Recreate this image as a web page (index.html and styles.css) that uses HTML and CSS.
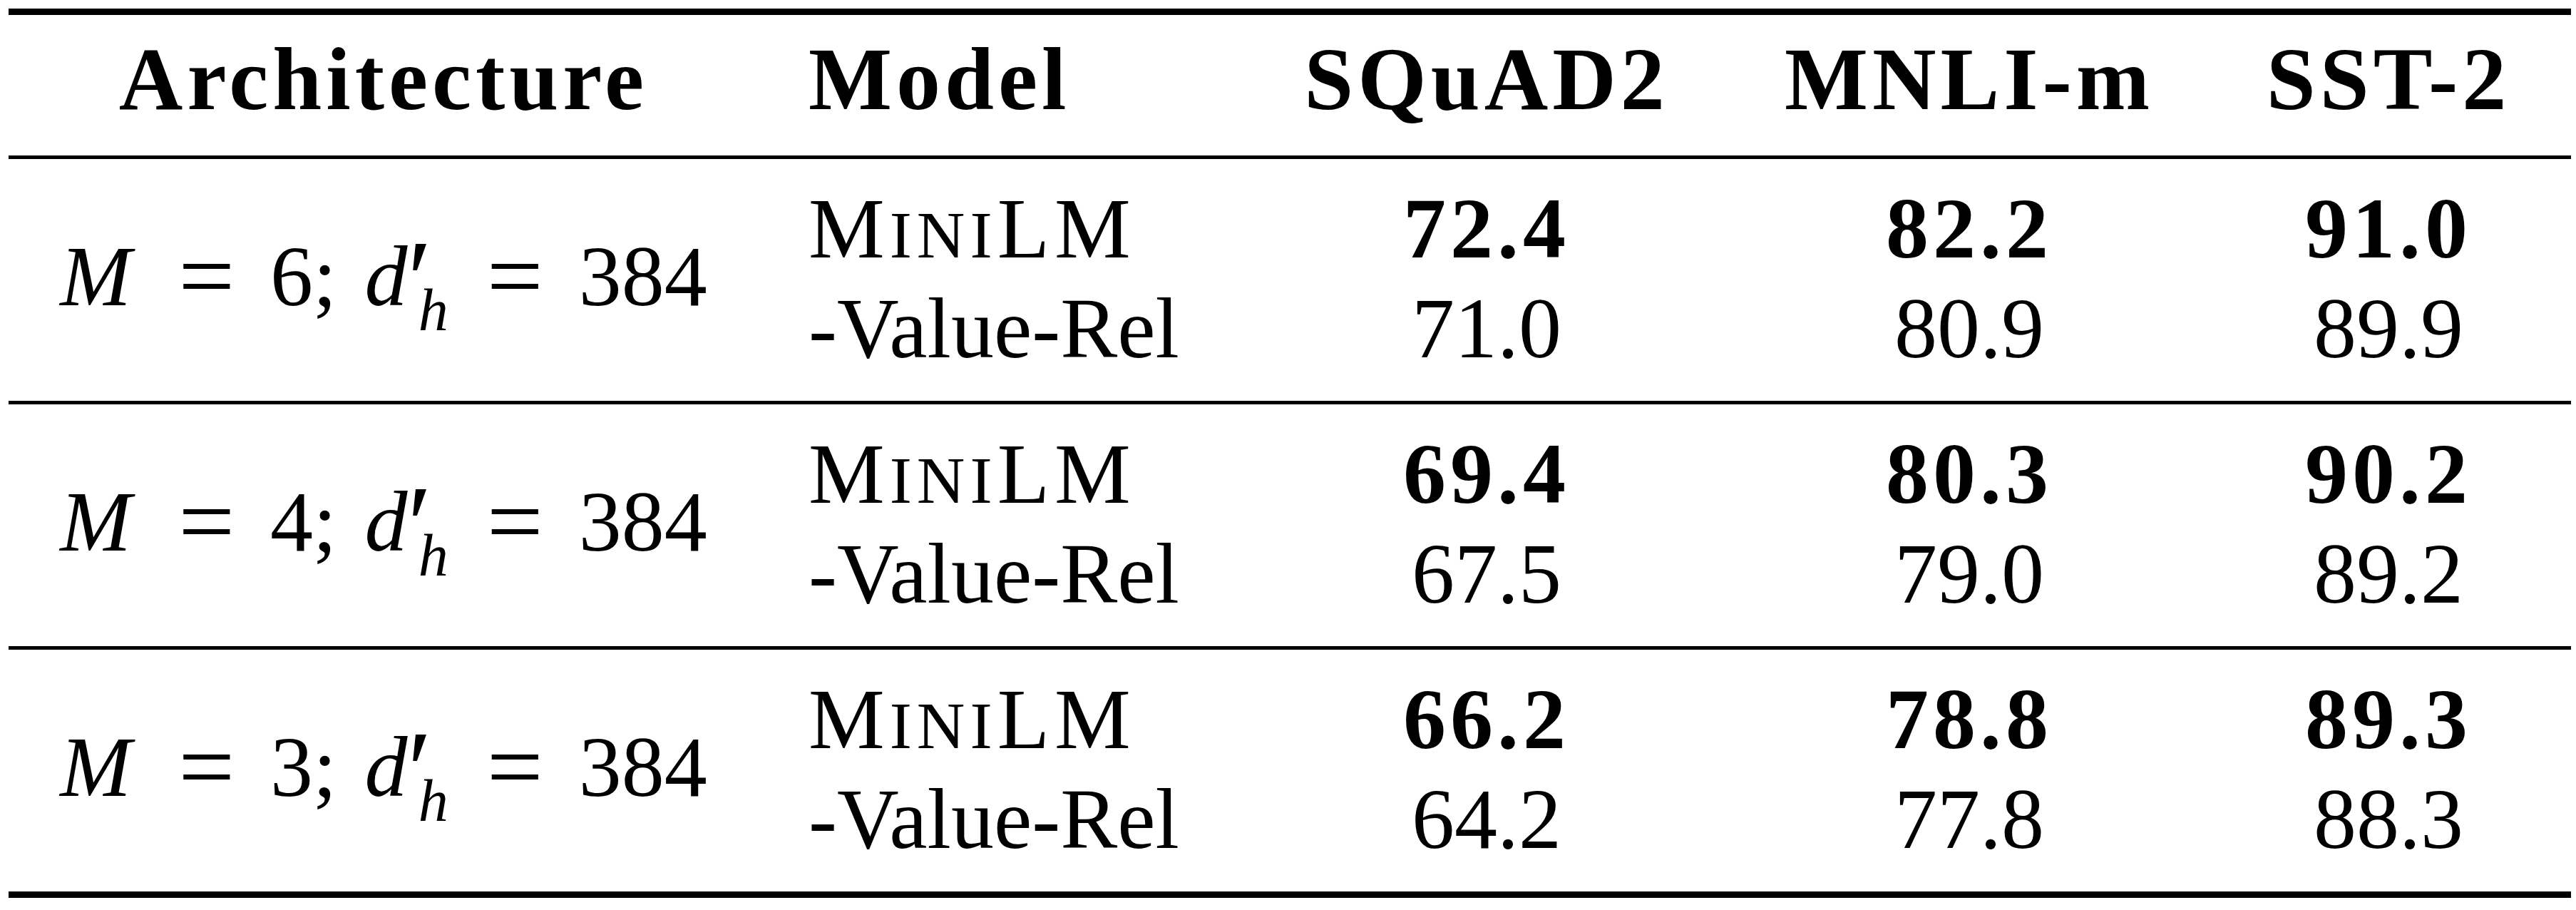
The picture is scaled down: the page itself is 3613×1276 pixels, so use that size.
FILE: index.html
```html
<!DOCTYPE html>
<html lang="en">
<head>
<meta charset="utf-8">
<title>MiniLM ablation table</title>
<link rel="stylesheet" href="styles.css">
</head>
<body>
<table class="results">
  <colgroup>
    <col class="c-arch"><col class="c-model"><col class="c-sq"><col class="c-mn"><col class="c-sst">
  </colgroup>
  <thead>
    <tr>
      <th>Architecture</th>
      <th class="model">Model</th>
      <th>SQuAD2</th>
      <th>MNLI-m</th>
      <th>SST-2</th>
    </tr>
  </thead>
  <tbody>
    <tr class="first">
      <td class="arch" rowspan="2"><span class="math"><i class="mi">M</i><span class="rel">=</span>6;<i class="mi d">d</i><span class="prime">′</span><i class="sub">h</i><span class="rel">=</span>384</span></td>
      <td class="model">M<span class="sc">ini</span>LM</td>
      <td class="best">72.4</td>
      <td class="best">82.2</td>
      <td class="best">91.0</td>
    </tr>
    <tr class="second">
      <td class="model">-Value-Rel</td>
      <td>71.0</td>
      <td>80.9</td>
      <td>89.9</td>
    </tr>
  </tbody>
  <tbody>
    <tr class="first">
      <td class="arch" rowspan="2"><span class="math"><i class="mi">M</i><span class="rel">=</span>4;<i class="mi d">d</i><span class="prime">′</span><i class="sub">h</i><span class="rel">=</span>384</span></td>
      <td class="model">M<span class="sc">ini</span>LM</td>
      <td class="best">69.4</td>
      <td class="best">80.3</td>
      <td class="best">90.2</td>
    </tr>
    <tr class="second">
      <td class="model">-Value-Rel</td>
      <td>67.5</td>
      <td>79.0</td>
      <td>89.2</td>
    </tr>
  </tbody>
  <tbody class="last">
    <tr class="first">
      <td class="arch" rowspan="2"><span class="math"><i class="mi">M</i><span class="rel">=</span>3;<i class="mi d">d</i><span class="prime">′</span><i class="sub">h</i><span class="rel">=</span>384</span></td>
      <td class="model">M<span class="sc">ini</span>LM</td>
      <td class="best">66.2</td>
      <td class="best">78.8</td>
      <td class="best">89.3</td>
    </tr>
    <tr class="second">
      <td class="model">-Value-Rel</td>
      <td>64.2</td>
      <td>77.8</td>
      <td>88.3</td>
    </tr>
  </tbody>
</table>
</body>
</html>
```

FILE: styles.css
```css
html, body {
  margin: 0;
  padding: 0;
  background: #ffffff;
}

body {
  font-family: "Liberation Serif", "Times New Roman", serif;
  color: #000000;
}

.results {
  border-collapse: separate;
  border-spacing: 0;
  table-layout: fixed;
  width: 3594px;
  margin: 12px 0 0 12px;
}

.c-arch { width: 1052px; }
.c-model { width: 676px; }
.c-sq { width: 690px; }
.c-mn { width: 664px; }
.c-sst { width: 512px; }

th {
  font-weight: bold;
  font-size: 124px;
  line-height: 137px;
  letter-spacing: 6px;
  padding: 22px 0 38px;
  border-top: 9px solid #000;
  text-align: center;
  white-space: nowrap;
}

td {
  font-size: 120px;
  line-height: 140px;
  padding: 0;
  text-align: center;
  vertical-align: top;
  white-space: nowrap;
}

th.model,
td.model {
  text-align: left;
  padding-left: 70px;
}

tr.first td {
  border-top: 5px solid #000;
  padding-top: 28px;
}

tr.second td {
  padding-bottom: 31px;
}

tr.first td.arch {
  padding: 0 0 10px;
  vertical-align: middle;
}

tbody.last tr.second td,
tbody.last td.arch {
  border-bottom: 9px solid #000;
}

td.best {
  font-weight: bold;
  letter-spacing: 6px;
}

.sc {
  font-size: 0.78em;
  line-height: 0;
  text-transform: uppercase;
}

td.model {
  letter-spacing: 0;
}

tr.first td.model {
  letter-spacing: 7px;
}

.math {
  display: inline-block;
  line-height: 140px;
  letter-spacing: 0;
}

.mi {
  font-style: italic;
}

.rel {
  font-size: 140px;
  line-height: 0;
  vertical-align: -6px;
  margin: 0 50px 0 66px;
}

.d {
  margin-left: 39px;
}

.prime {
  font-size: 156px;
  line-height: 0;
  letter-spacing: -0.12em;
  vertical-align: -17px;
}

.sub {
  font-style: italic;
  font-size: 84px;
  line-height: 0;
  vertical-align: -35px;
}

.sub + .rel {
  margin-left: 54px;
}
```
